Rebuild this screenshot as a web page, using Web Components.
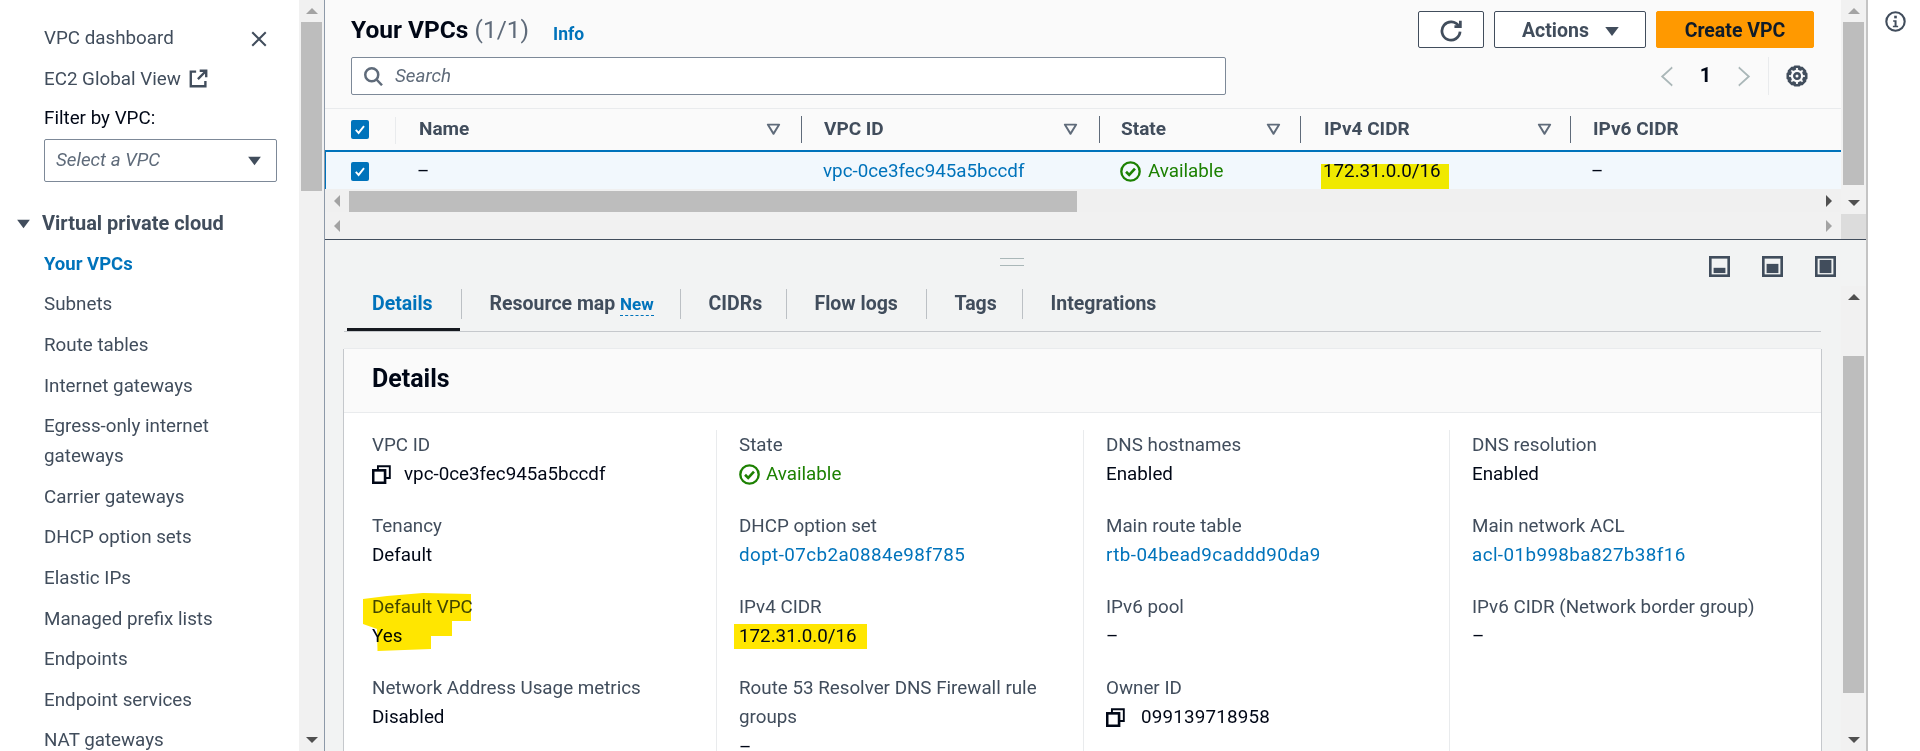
<!DOCTYPE html>
<html lang="en">
<head>
<meta charset="utf-8">
<title>Your VPCs</title>
<style>
  html, body { margin: 0; height: 751px; overflow: hidden; background: #fff; }
  body { font: 18.8px/30px Roboto, "Liberation Sans", sans-serif; color: #000716; }
</style>
</head>
<body>
<vpc-console>
  <vpc-nav slot="nav"></vpc-nav>
  <vpc-scrollbar slot="navbar" start="0" size="169" first="#a3a3a3"></vpc-scrollbar>
  <vpc-list slot="list"></vpc-list>
  <vpc-detail slot="detail"></vpc-detail>
</vpc-console>

<script>
// gear outline: 8 teeth around a hub
function gearPath() {
  const pts = [];
  for (let i = 0; i < 8; i++) {
    const a = i * Math.PI / 4;
    [[5.4, -0.5], [6.9, -0.24], [6.9, 0.24], [5.4, 0.5]].forEach(([r, d]) => {
      pts.push((8 + r * Math.cos(a + d)).toFixed(2) + ' ' + (8 + r * Math.sin(a + d)).toFixed(2));
    });
  }
  return 'M' + pts.join('L') + 'z';
}

// shared icon set, everything on a 16 box
const ICONS = {
  close: '<path d="M2 2l12 12M14 2L2 14" fill="none" stroke="currentColor" stroke-width="1.8"/>',
  external: '<path d="M9 1.5h5.5V7M14.5 1.5L7.5 8.5M6 2.2H1.5v12.3h12.3V10" fill="none" stroke="currentColor" stroke-width="2"/>',
  search: '<circle cx="7" cy="7" r="5.2" fill="none" stroke="currentColor" stroke-width="2"/><path d="M10.8 10.8l4.4 4.6" stroke="currentColor" stroke-width="2"/>',
  refresh: '<path d="M10.5 4.8h4.3V.5" fill="none" stroke="currentColor" stroke-width="2"/><path d="M14.6 8.5a6.6 6.6 0 1 1-1-4" fill="none" stroke="currentColor" stroke-width="2"/>',
  gear: '<circle cx="8" cy="8" r="2" fill="none" stroke="currentColor" stroke-width="1.8"/><path d="' + gearPath() + '" fill="none" stroke="currentColor" stroke-width="1.9" stroke-linejoin="round"/>',
  caret: '<path d="M2 4h12L8 13z" fill="currentColor"/>',
  filter: '<path d="M2 3h12L8 13.500z" fill="none" stroke="currentColor" stroke-width="2.2" stroke-linejoin="round"/>',
  ok: '<circle cx="8" cy="8" r="7" fill="none" stroke="currentColor" stroke-width="1.8"/><path d="M4.6 8.2l2.4 2.4 4.4-4.8" fill="none" stroke="currentColor" stroke-width="2"/>',
  copy: '<path d="M5 4.5V1h10v10h-4" fill="none" stroke="currentColor" stroke-width="1.6"/><rect x="1" y="4.5" width="10" height="10.5" fill="none" stroke="currentColor" stroke-width="2.2"/>',
  info: '<circle cx="8" cy="8" r="7" fill="none" stroke="currentColor" stroke-width="1.6"/><rect x="7" y="3.6" width="2" height="2" fill="currentColor"/><path d="M6.2 7h2.6v4.2h1.2v1.2H6v-1.2h1.3V8.2H6.2z" fill="currentColor"/>',
  left: '<path d="M14 1L2.500 8 14 15" fill="none" stroke="currentColor" stroke-width="1.6"/>',
  right: '<path d="M2 1l11.500 7L2 15" fill="none" stroke="currentColor" stroke-width="1.6"/>',
  tick: '<path d="M3.2 8.4l3.2 3.2 6.2-7.2" fill="none" stroke="currentColor" stroke-width="2.2"/>',
  paneLow: '<rect x="1" y="1" width="14" height="14" fill="none" stroke="currentColor" stroke-width="2"/><rect x="3.5" y="9" width="9" height="4" fill="currentColor"/>',
  paneMid: '<rect x="1" y="1" width="14" height="14" fill="none" stroke="currentColor" stroke-width="2"/><rect x="3.5" y="6" width="9" height="7" fill="currentColor"/>',
  paneFull: '<rect x="1" y="1" width="14" height="14" fill="none" stroke="currentColor" stroke-width="2"/><rect x="3.5" y="3" width="9" height="10" fill="currentColor"/>'
};

class VpcIcon extends HTMLElement {
  connectedCallback() {
    const w = this.getAttribute('w') || 16;
    const h = this.getAttribute('h') || w;
    this.attachShadow({ mode: 'open' }).innerHTML = `
      <style>:host { display: inline-flex; flex: none; } svg { display: block; }</style>
      <svg width="${w}" height="${h}" viewBox="0 0 16 16" preserveAspectRatio="none">${ICONS[this.getAttribute('name')]}</svg>`;
  }
}
customElements.define('vpc-icon', VpcIcon);

// page frame: side nav, its scrollbar, the two panels and the right rail
class VpcConsole extends HTMLElement {
  connectedCallback() {
    this.attachShadow({ mode: 'open' }).innerHTML = `
      <style>
        :host { display: grid; grid-template-columns: 299px 25px 1px 1541px 1fr; height: 751px; overflow: hidden; }
        .line { background: #8d99a8; }
        .main { display: flex; flex-direction: column; min-width: 0; height: 751px; }
        .rail { border-left: 2px solid #c4c4c4; display: flex; justify-content: center; padding: 11px 0 0 2px; color: #414d5c; }
      </style>
      <slot name="nav"></slot>
      <slot name="navbar"></slot>
      <div class="line"></div>
      <div class="main"><slot name="list"></slot><slot name="detail"></slot></div>
      <div class="rail"><vpc-icon name="info" w="21" h="21"></vpc-icon></div>`;
  }
}
customElements.define('vpc-console', VpcConsole);

class VpcScrollbar extends HTMLElement {
  connectedCallback() {
    const g = (k, d) => this.getAttribute(k) || d;
    this.attachShadow({ mode: 'open' }).innerHTML = `
      <style>
        :host { display: flex; flex-direction: column; width: 25px; height: 100%; background: #f1f1f1; }
        .arrow { height: 22px; flex: none; display: flex; align-items: center; justify-content: center; }
        .track { flex: 1; min-height: 0; }
        .thumb { margin: ${g('start', 0)}px 2px 0; height: ${g('size', 100)}px; background: #bdbdbd; }
        i { width: 0; height: 0; border: 6px solid transparent; }
        .up { border-top: 0; border-bottom: 6px solid ${g('first', '#505050')}; }
        .dn { border-bottom: 0; border-top: 6px solid ${g('last', '#505050')}; }
      </style>
      <div class="arrow"><i class="up"></i></div>
      <div class="track"><div class="thumb"></div></div>
      <div class="arrow"><i class="dn"></i></div>`;
  }
}
customElements.define('vpc-scrollbar', VpcScrollbar);

class NavItem extends HTMLElement {
  connectedCallback() {
    this.attachShadow({ mode: 'open' }).innerHTML = `
      <style>
        :host { display: block; padding: 5.3px 20px 5.3px 0; color: #414d5c; line-height: 30px; }
        :host([active]) { color: #0073bb; font-weight: 700; font-size: 18.5px; }
        vpc-icon { vertical-align: -3px; margin-left: 8px; }
      </style>
      <slot></slot>${this.hasAttribute('external') ? '<vpc-icon name="external" w="19" h="19"></vpc-icon>' : ''}`;
  }
}
customElements.define('nav-item', NavItem);

class VpcNav extends HTMLElement {
  connectedCallback() {
    const links = ['Subnets', 'Route tables', 'Internet gateways', 'Egress-only internet gateways', 'Carrier gateways',
      'DHCP option sets', 'Elastic IPs', 'Managed prefix lists', 'Endpoints', 'Endpoint services', 'NAT gateways'];
    this.attachShadow({ mode: 'open' }).innerHTML = `
      <style>
        :host { display: block; width: 299px; height: 751px; overflow: hidden; padding: 17.7px 0 0 44px; box-sizing: border-box; background: #fff; }
        .top { display: flex; justify-content: space-between; }
        .top vpc-icon { color: #414d5c; margin: 12px 31px 0 0; }
        .filter { line-height: 30px; margin-top: 4px; color: #000716; }
        .select { width: 233px; height: 43px; box-sizing: border-box; margin-top: 6px; border: 1px solid #7d8998; border-radius: 2px;
          display: flex; align-items: center; justify-content: space-between; padding: 0 13px 0 11px; font-style: italic; color: #5f6b7a; background: #fff; }
        .select vpc-icon { color: #414d5c; }
        .section { margin: 21px 0 0 -29px; display: flex; align-items: center; height: 40.6px; font-size: 20px; font-weight: 700; color: #414d5c; gap: 10px; }
        .section vpc-icon { color: #414d5c; }
      </style>
      <div class="top"><nav-item>VPC dashboard</nav-item><vpc-icon name="close" w="18" h="18"></vpc-icon></div>
      <nav-item external>EC2 Global View</nav-item>
      <div class="filter">Filter by VPC:</div>
      <div class="select"><span>Select a VPC</span><vpc-icon name="caret" w="17" h="15"></vpc-icon></div>
      <div class="section"><vpc-icon name="caret" w="17" h="15"></vpc-icon><span>Virtual private cloud</span></div>
      <nav-item active>Your VPCs</nav-item>
      ${links.map(l => `<nav-item>${l}</nav-item>`).join('')}`;
  }
}
customElements.define('vpc-nav', VpcNav);

class VpcButton extends HTMLElement {
  connectedCallback() {
    this.attachShadow({ mode: 'open' }).innerHTML = `
      <style>
        :host { display: inline-flex; align-items: center; justify-content: center; gap: 14px; height: 37px; box-sizing: border-box; border: 1px solid #414d5c;
          border-radius: 2px; background: #fff; color: #414d5c; font-size: 19.5px; font-weight: 700; padding-top: 2px; }
        :host([primary]) { background: #ff9900; border-color: #ff9900; color: #0f1b2a; }
      </style><slot></slot>`;
  }
}
customElements.define('vpc-button', VpcButton);

class HeadCell extends HTMLElement {
  connectedCallback() {
    const noFilter = this.hasAttribute('nofilter');
    this.attachShadow({ mode: 'open' }).innerHTML = `
      <style>
        :host { display: flex; align-items: center; justify-content: space-between; height: 27px; align-self: center; box-sizing: border-box;
          border-left: 1px solid #5f6b7a; padding: 0 21px 2px var(--pad, 23px); font-size: 19px; font-weight: 700; color: #414d5c; }
        vpc-icon { color: #5f6b7a; margin-right: var(--tri, 0); }
      </style>
      <slot></slot>${noFilter ? '' : '<vpc-icon name="filter" w="15" h="14"></vpc-icon>'}`;
  }
}
customElements.define('head-cell', HeadCell);

class VpcCheck extends HTMLElement {
  connectedCallback() {
    this.attachShadow({ mode: 'open' }).innerHTML = `
      <style>:host { display: inline-flex; width: 18px; height: 19px; background: #0073bb; border-radius: 2px; color: #fff; align-items: center; justify-content: center; }</style>
      <vpc-icon name="tick" w="14" h="15"></vpc-icon>`;
  }
}
customElements.define('vpc-check', VpcCheck);

// top panel: title, toolbar, the table and its double horizontal scrollbar
class VpcList extends HTMLElement {
  connectedCallback() {
    this.attachShadow({ mode: 'open' }).innerHTML = `
      <style>
        :host { display: grid; grid-template-columns: 1516px 25px; height: 240px; flex: none; background: #fafafa; box-sizing: border-box; border-bottom: 1px solid #414d5c; }
        .col { min-width: 0; display: flex; flex-direction: column; }
        .bar { height: 57px; box-sizing: border-box; padding: 11px 27px 0 26px; display: flex; align-items: flex-start; }
        h1 { margin: 2px 0 0; font-size: 24.5px; line-height: 33px; font-weight: 700; color: #000716; }
        h1 span { font-weight: 400; color: #5f6b7a; }
        .info { color: #0073bb; font-weight: 700; font-size: 17.500px; margin: 8px 0 0 24px; }
        .actions { margin-left: auto; display: flex; gap: 10px; }
        .tools { height: 51px; box-sizing: border-box; padding-left: 26px; display: flex; align-items: flex-start; }
        .search { width: 875px; height: 38px; box-sizing: border-box; border: 1px solid #7d8998; border-radius: 2px; background: #fff; display: flex; align-items: center;
          padding-left: 11px; gap: 12px; font-style: italic; color: #5f6b7a; }
        .search vpc-icon { color: #5f6b7a; }
        .pager { display: flex; align-items: center; height: 38px; margin-left: auto; }
        .pager .chev { color: #aab7b8; }
        .pager b { width: 63px; text-align: center; font-size: 20px; font-weight: 700; color: #000716; padding-bottom: 2px; }
        .pager .gear { border-left: 1px solid #e9ebed; height: 38px; margin-left: 17px; padding: 0 33px 0 17px; display: flex; align-items: center; color: #414d5c; }
        .grid { display: grid; grid-template-columns: 71px 405px 298px 201px 270px 1fr; }
        .head { height: 42px; border-top: 1px solid #e9ebed; box-sizing: border-box; }
        .head .chk { display: flex; align-items: center; padding-left: 26px; position: relative; }
        .head .sep { position: absolute; right: 0; top: 8px; height: 27px; border-right: 1px solid #e9ebed; }
        .row { height: 39px; box-sizing: border-box; border-top: 2px solid #0073bb; box-shadow: inset 1px 0 0 #0073bb; background: #f2f8fd; align-items: start; }
        .row > div { padding: 0 0 0 23px; line-height: 33px; margin-top: 3px; }
        .row .chk { padding-left: 26px; display: flex; align-items: center; margin-top: 10px; line-height: 19px; }
        a { color: #0073bb; text-decoration: none; }
        .row .ok { color: #1d8102; display: flex; gap: 7px; align-items: center; padding-left: 21px; }
        mark { display: inline-block; background: #f0e900; color: #000716; line-height: 14px; height: 25px; padding: 0 8px 0 2px; margin: 9px 0 0 -2px; vertical-align: top; }
        .hbar { display: flex; align-items: center; background: #f0f0f0; height: 23px; flex: none; }
        .hbar.two { height: 27px; background: #f1f1f1; }
        .arrow { width: 24px; flex: none; display: flex; justify-content: center; }
        .arrow i { width: 0; height: 0; border: 6px solid transparent; }
        .l i { border-left: 0; border-right: 6px solid #a3a3a3; }
        .r i { border-right: 0; border-left: 6px solid #505050; }
        .two .r i { border-left-color: #a3a3a3; }
        .thumb { width: 728px; height: 21px; background: #bdbdbd; margin-top: 2px; }
        .fill { flex: 1; }
        .side { display: flex; flex-direction: column; height: 239px; }
        .corner { height: 25px; background: #dcdcdc; flex: none; }
        .side vpc-scrollbar { flex: 1; height: auto; min-height: 0; }
      </style>
      <div class="col">
        <div class="bar">
          <h1>Your VPCs <span>(1/1)</span></h1>
          <span class="info">Info</span>
          <div class="actions">
            <vpc-button style="width:66px"><vpc-icon name="refresh" w="22" h="22"></vpc-icon></vpc-button>
            <vpc-button style="width:152px; padding-left:3px">Actions <vpc-icon name="caret" w="18" h="16"></vpc-icon></vpc-button>
            <vpc-button primary style="width:158px">Create VPC</vpc-button>
          </div>
        </div>
        <div class="tools">
          <div class="search"><vpc-icon name="search" w="20" h="20"></vpc-icon><span>Search</span></div>
          <div class="pager">
            <vpc-icon class="chev" name="left" w="14" h="21"></vpc-icon><b>1</b><vpc-icon class="chev" name="right" w="14" h="21"></vpc-icon>
            <div class="gear"><vpc-icon name="gear" w="22" h="22"></vpc-icon></div>
          </div>
        </div>
        <div class="grid head">
          <div class="chk"><vpc-check></vpc-check><span class="sep"></span></div>
          <head-cell style="border:0; --tri:-1px">Name</head-cell>
          <head-cell style="--pad:22px">VPC ID</head-cell>
          <head-cell style="--pad:21px; --tri:-2px">State</head-cell>
          <head-cell style="--tri:-3px">IPv4 CIDR</head-cell>
          <head-cell style="--pad:22px" nofilter>IPv6 CIDR</head-cell>
        </div>
        <div class="grid row">
          <div class="chk"><vpc-check></vpc-check></div>
          <div style="padding-left:21px">–</div>
          <div style="padding-left:22px"><a>vpc-0ce3fec945a5bccdf</a></div>
          <div class="ok"><vpc-icon name="ok" w="21" h="21"></vpc-icon>Available</div>
          <div><mark>172.31.0.0/16</mark></div>
          <div style="padding-left:21px">–</div>
        </div>
        <div class="hbar">
          <div class="arrow l"><i></i></div><div class="thumb"></div><div class="fill"></div><div class="arrow r"><i></i></div>
        </div>
        <div class="hbar two"><div class="arrow l"><i></i></div><div class="fill"></div><div class="arrow r"><i></i></div></div>
      </div>
      <div class="side">
        <vpc-scrollbar start="0" size="163" first="#a3a3a3"></vpc-scrollbar>
        <div class="corner"></div>
      </div>`;
  }
}
customElements.define('vpc-list', VpcList);

class KvItem extends HTMLElement {
  connectedCallback() {
    this.attachShadow({ mode: 'open' }).innerHTML = `
      <style>
        :host { display: block; position: relative; height: 81.3px; line-height: 29px; }
        .k { color: #414d5c; padding-top: .6px; }
        .v { color: #000716; display: flex; align-items: center; gap: 13px; }
      </style>
      <div class="k">${this.getAttribute('label')}</div>
      <div class="v"><slot></slot></div>`;
  }
}
customElements.define('kv-item', KvItem);

// marker scribble over a key/value pair
class HandHighlight extends HTMLElement {
  connectedCallback() {
    this.attachShadow({ mode: 'open' }).innerHTML = `
      <style>:host { position: absolute; left: -9px; top: 0; width: 120px; height: 70px; mix-blend-mode: multiply; pointer-events: none; }</style>
      <svg width="120" height="70" viewBox="0 0 120 70"><path fill="#ffe600" d="M0 6L24 3 60 0 108 1V28H89V43H68V56L14.500 58 14 36 0 31z"/></svg>`;
  }
}
customElements.define('hand-highlight', HandHighlight);

class VpcDetail extends HTMLElement {
  connectedCallback() {
    this.attachShadow({ mode: 'open' }).innerHTML = `
      <style>
        :host { display: block; flex: 1; min-height: 0; background: #f2f3f3; overflow: hidden; }
        .split { height: 46px; box-sizing: border-box; padding: 18px 4px 0 675px; display: flex; align-items: flex-start; }
        .handle { width: 24px; height: 8px; box-sizing: border-box; border-top: 1px solid #aab7b8; border-bottom: 1px solid #aab7b8; }
        .panes { margin-left: auto; display: flex; gap: 32px; color: #414d5c; margin-top: -2px; padding-right: 26px; }
        .panes vpc-icon { width: 21px; }
        .below { display: grid; grid-template-columns: 1516px 25px; height: 465px; }
        .content { min-width: 0; overflow: hidden; padding-top: 3px; box-sizing: border-box; }
        .tabs { margin: 0 20px 0 19px; height: 43px; box-sizing: border-box; border-bottom: 1px solid #c5c8cc; padding-left: 3px;
          display: grid; grid-template-columns: 114px 219px 106px 140px 96px 165px; font-size: 19.5px; font-weight: 700; color: #414d5c; }
        .tabs div { height: 30px; line-height: 30px; padding-left: 27.500px; border-left: 1px solid #bcc0c4; white-space: nowrap; }
        .tabs div:first-child { border: 0; padding-left: 25px; color: #0073bb; position: relative; height: 42px; }
        .tabs div:first-child::after { content: ""; position: absolute; left: 0; right: 1px; bottom: 0; height: 3px; background: #16191f; }
        .new { color: #0073bb; font-size: 17px; border-bottom: 1px dashed #0073bb; padding-bottom: 1px; }
        .card { margin: 17px 20px 0 19px; background: #fff; box-shadow: -1px 0 0 #c5c8cc, 1px 0 0 #c5c8cc, 0 -1px 0 #e9ebed; height: 420px; }
        .card h2 { margin: 0; height: 64px; box-sizing: border-box; padding: 13px 0 0 28px; font-size: 25px; line-height: 33px; background: #fafafa; border-bottom: 1px solid #e9ebed; color: #000716; }
        .kvs { display: grid; grid-template-columns: 372px 367px 366px 1fr; margin-top: 17px; }
        .kvs > div { padding-left: 22px; border-left: 1px solid #e9ebed; min-height: 400px; }
        .kvs > div:first-child { padding-left: 28px; border: 0; }
        a { color: #0073bb; text-decoration: none; letter-spacing: .42px; }
        .ok { color: #1d8102; display: flex; gap: 6px; align-items: center; }
        .num { letter-spacing: .2px; margin-left: 3px; }
        .last { line-height: 8px; margin-top: 11px; }
        mark { background: #ffe600; color: #000716; display: block; line-height: 25px; padding: 0 10px 0 5px; margin: 2px 0 0 -5px; }
      </style>
      <div class="split">
        <div class="handle"></div>
        <div class="panes">
          <vpc-icon name="paneLow" w="21" h="21"></vpc-icon>
          <vpc-icon name="paneMid" w="21" h="21"></vpc-icon>
          <vpc-icon name="paneFull" w="21" h="21"></vpc-icon>
        </div>
      </div>
      <div class="below">
        <div class="content">
          <div class="tabs">
            <div>Details</div>
            <div>Resource map <span class="new">New</span></div>
            <div>CIDRs</div>
            <div>Flow logs</div>
            <div>Tags</div>
            <div>Integrations</div>
          </div>
          <div class="card">
            <h2>Details</h2>
            <div class="kvs">
              <div>
                <kv-item label="VPC ID"><vpc-icon name="copy" w="19" h="19"></vpc-icon><span>vpc-0ce3fec945a5bccdf</span></kv-item>
                <kv-item label="Tenancy">Default</kv-item>
                <kv-item label="Default VPC">Yes<hand-highlight></hand-highlight></kv-item>
                <kv-item label="Network Address Usage metrics">Disabled</kv-item>
              </div>
              <div>
                <kv-item label="State"><span class="ok"><vpc-icon name="ok" w="21" h="21"></vpc-icon>Available</span></kv-item>
                <kv-item label="DHCP option set"><a>dopt-07cb2a0884e98f785</a></kv-item>
                <kv-item label="IPv4 CIDR"><mark>172.31.0.0/16</mark></kv-item>
                <kv-item label="Route 53 Resolver DNS Firewall rule groups"><span class="last">–</span></kv-item>
              </div>
              <div>
                <kv-item label="DNS hostnames">Enabled</kv-item>
                <kv-item label="Main route table"><a>rtb-04bead9caddd90da9</a></kv-item>
                <kv-item label="IPv6 pool">–</kv-item>
                <kv-item label="Owner ID"><vpc-icon name="copy" w="19" h="19"></vpc-icon><span class="num">099139718958</span></kv-item>
              </div>
              <div>
                <kv-item label="DNS resolution">Enabled</kv-item>
                <kv-item label="Main network ACL"><a>acl-01b998ba827b38f16</a></kv-item>
                <kv-item label="IPv6 CIDR (Network border group)">–</kv-item>
              </div>
            </div>
          </div>
        </div>
        <vpc-scrollbar start="48" size="337"></vpc-scrollbar>
      </div>`;
  }
}
customElements.define('vpc-detail', VpcDetail);
</script>
</body>
</html>
